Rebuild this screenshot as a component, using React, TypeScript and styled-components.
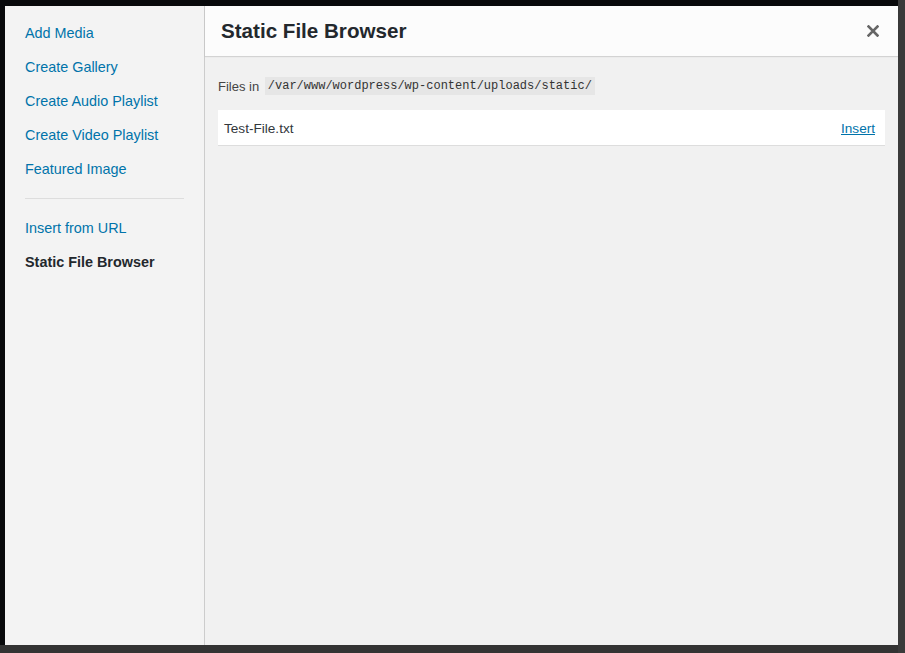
import styled, { createGlobalStyle } from "styled-components";

const GlobalStyle = createGlobalStyle`
  html, body {
    margin: 0;
    padding: 0;
  }
  body {
    font-family: "Liberation Sans", Arial, sans-serif;
    -webkit-font-smoothing: antialiased;
  }
`;

const menuItems = [
  "Add Media",
  "Create Gallery",
  "Create Audio Playlist",
  "Create Video Playlist",
  "Featured Image",
];

const files = ["Test-File.txt"];

const App = () => {
  return (
    <>
      <GlobalStyle />
      <Backdrop>
        <Modal>
          <Sidebar>
            {menuItems.map((item) => (
              <MenuItem key={item}>{item}</MenuItem>
            ))}
            <Separator />
            <MenuItem>Insert from URL</MenuItem>
            <MenuItem active>Static File Browser</MenuItem>
          </Sidebar>
          <Main>
            <Header>
              <Title>Static File Browser</Title>
              <CloseButton aria-label="Close">
                <svg width="12" height="12" viewBox="0 0 12 12">
                  <path
                    d="M1.5 1.5 L10.5 10.5 M10.5 1.5 L1.5 10.5"
                    stroke="#666"
                    strokeWidth="2.6"
                    strokeLinecap="square"
                  />
                </svg>
              </CloseButton>
            </Header>
            <Content>
              <PathLine>
                Files in <Code>/var/www/wordpress/wp-content/uploads/static/</Code>
              </PathLine>
              {files.map((file) => (
                <FileRow key={file}>
                  <FileName>{file}</FileName>
                  <InsertLink href="#">Insert</InsertLink>
                </FileRow>
              ))}
            </Content>
          </Main>
        </Modal>
      </Backdrop>
    </>
  );
};

export default App;

const Backdrop = styled.div`
  width: 905px;
  height: 653px;
  box-sizing: border-box;
  padding: 6px 7px 8px 5px;
  background: linear-gradient(to right, transparent 898px, #3a3a3a 898px),
    linear-gradient(to bottom, #08090b 645px, #333333 645px);
  overflow: hidden;
`;

const Modal = styled.div`
  width: 893px;
  height: 639px;
  display: flex;
  background: #f1f1f1;
`;

const Sidebar = styled.div`
  width: 199px;
  flex-shrink: 0;
  padding-top: 10px;
  background: #f3f3f3;
  border-right: 1px solid #cccccc;
  display: flex;
  flex-direction: column;
`;

const MenuItem = styled.a<{ active?: boolean }>`
  display: block;
  padding: 8px 20px;
  font-size: 14.4px;
  line-height: 18px;
  color: ${(p) => (p.active ? "#23282d" : "#0073aa")};
  font-weight: ${(p) => (p.active ? 700 : 400)};
  text-decoration: none;
  cursor: pointer;
`;

const Separator = styled.div`
  margin: 12px 20px;
  border-top: 1px solid #dddddd;
`;

const Main = styled.div`
  flex: 1;
  display: flex;
  flex-direction: column;
`;

const Header = styled.div`
  height: 50px;
  display: flex;
  align-items: center;
  justify-content: space-between;
  background: #fcfcfc;
  box-shadow: 0 1px 1px rgba(0, 0, 0, 0.12);
  position: relative;
  z-index: 1;
`;

const Title = styled.h1`
  margin: 0;
  padding: 0 16px;
  font-size: 20.6px;
  line-height: 50px;
  font-weight: 700;
  color: #23282d;
`;

const CloseButton = styled.button`
  width: 50px;
  height: 50px;
  border: none;
  background: transparent;
  display: flex;
  align-items: center;
  justify-content: center;
  padding: 0;
  cursor: pointer;
`;

const Content = styled.div`
  padding: 21px 13px 0 13px;
`;

const PathLine = styled.p`
  margin: 0 0 15px 0;
  height: 18px;
  display: flex;
  align-items: center;
  gap: 2px;
  font-size: 13px;
  color: #444444;
  white-space: pre;
`;

const Code = styled.code`
  font-family: "Liberation Mono", "DejaVu Sans Mono", monospace;
  font-size: 12px;
  line-height: 18px;
  padding: 0 3px;
  background: #e6e6e6;
  color: #333333;
`;

const FileRow = styled.div`
  height: 36px;
  box-sizing: border-box;
  display: flex;
  align-items: center;
  justify-content: space-between;
  padding: 1px 10px 0 6px;
  background: #ffffff;
  border-bottom: 1px solid #dddddd;
`;

const FileName = styled.span`
  font-size: 13.6px;
  color: #32373c;
`;

const InsertLink = styled.a`
  font-size: 13.6px;
  color: #0073aa;
  text-decoration: underline;
`;
